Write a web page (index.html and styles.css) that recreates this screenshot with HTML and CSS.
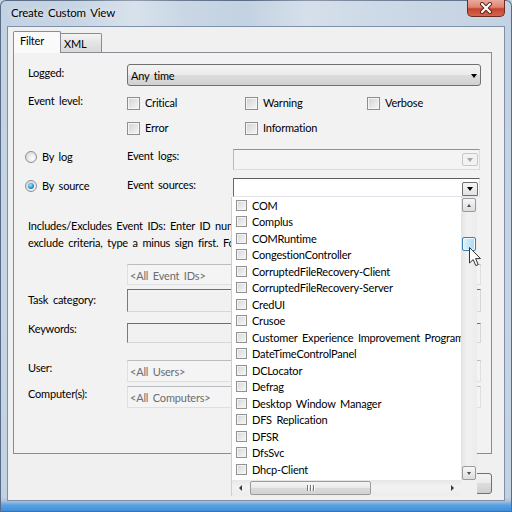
FILE: index.html
```html
<!DOCTYPE html>
<html>
<head>
<meta charset="utf-8">
<link rel="stylesheet" href="styles.css">
</head>
<body>
<div class="window">
  <div class="titlebar">
    <span class="title">Create Custom View</span>
    <div class="close">
      <svg width="14" height="12" viewBox="0 0 14 12">
        <path d="M3 2 L11 10 M11 2 L3 10" stroke="#5a1f17" stroke-width="4" stroke-linecap="round"/>
        <path d="M3 2 L11 10 M11 2 L3 10" stroke="#ffffff" stroke-width="2.2" stroke-linecap="round"/>
      </svg>
    </div>
  </div>
  <div class="client">
    <div class="tabs">
      <div class="tab active">Filter</div>
      <div class="tab xml">XML</div>
    </div>
    <div class="panel">
      <div class="row r1">
        <div class="lbl">Logged:</div>
        <div class="combo"><span>Any time</span><span class="arr"></span></div>
      </div>
      <div class="row r2">
        <div class="lbl">Event level:</div>
        <div class="checks">
          <div class="chk c1"><span class="box"></span>Critical</div>
          <div class="chk c2"><span class="box"></span>Warning</div>
          <div class="chk"><span class="box"></span>Verbose</div>
        </div>
      </div>
      <div class="row r3">
        <div class="lbl"></div>
        <div class="checks">
          <div class="chk c1"><span class="box"></span>Error</div>
          <div class="chk c2"><span class="box"></span>Information</div>
        </div>
      </div>
      <div class="row r4">
        <div class="ritem"><span class="radio"></span>By log</div>
        <div class="lbl2">Event logs:</div>
        <div class="cb-dis"><span class="dbtn"><span class="arr grey"></span></span></div>
      </div>
      <div class="row r5">
        <div class="ritem"><span class="radio on"></span>By source</div>
        <div class="lbl2">Event sources:</div>
        <div class="cb-src"><span class="sbtn"><span class="arr"></span></span></div>
      </div>
      <div class="row r6">
        <div class="desc">Includes/Excludes Event IDs: Enter ID numbers and/or ID ranges separated by commas. To<br>exclude criteria, type a minus sign first. For example 1,3,5-99,-76</div>
      </div>
      <div class="row r7">
        <div class="lbl"></div>
        <div class="field">&lt;All Event IDs&gt;</div>
      </div>
      <div class="row r8">
        <div class="lbl">Task category:</div>
        <div class="field2"></div>
      </div>
      <div class="row r9">
        <div class="lbl">Keywords:</div>
        <div class="field2"></div>
      </div>
      <div class="row r10">
        <div class="lbl">User:</div>
        <div class="field">&lt;All Users&gt;</div>
      </div>
      <div class="row r11">
        <div class="lbl">Computer(s):</div>
        <div class="field">&lt;All Computers&gt;</div>
      </div>
    </div>
    <div class="buttons">
      <div class="btn">OK</div>
      <div class="btn">Cancel</div>
    </div>

    <div class="droplist">
      <div class="dl-body">
        <div class="items">
          <div class="item"><span class="ibox"></span>COM</div>
          <div class="item"><span class="ibox"></span>Complus</div>
          <div class="item"><span class="ibox"></span>COMRuntime</div>
          <div class="item"><span class="ibox"></span>CongestionController</div>
          <div class="item"><span class="ibox"></span>CorruptedFileRecovery-Client</div>
          <div class="item"><span class="ibox"></span>CorruptedFileRecovery-Server</div>
          <div class="item"><span class="ibox"></span>CredUI</div>
          <div class="item"><span class="ibox"></span>Crusoe</div>
          <div class="item"><span class="ibox"></span>Customer Experience Improvement Program</div>
          <div class="item"><span class="ibox"></span>DateTimeControlPanel</div>
          <div class="item"><span class="ibox"></span>DCLocator</div>
          <div class="item"><span class="ibox"></span>Defrag</div>
          <div class="item"><span class="ibox"></span>Desktop Window Manager</div>
          <div class="item"><span class="ibox"></span>DFS Replication</div>
          <div class="item"><span class="ibox"></span>DFSR</div>
          <div class="item"><span class="ibox"></span>DfsSvc</div>
          <div class="item"><span class="ibox"></span>Dhcp-Client</div>
        </div>
        <div class="vscroll">
          <div class="vbtn"><span class="uarr"></span></div>
          <div class="vtrack"><div class="vthumb"></div></div>
          <div class="vbtn"><span class="darr"></span></div>
        </div>
      </div>
      <div class="hscroll">
        <div class="harrow"><span class="larr"></span></div>
        <div class="hthumb"><span class="grip"></span><span class="grip"></span><span class="grip"></span></div>
        <div class="hspace"></div>
        <div class="harrow"><span class="rarr"></span></div>
        <div class="corner"></div>
      </div>
    </div>

    <svg class="cursor" width="13" height="20" viewBox="0 0 13 20">
      <path d="M0.5 0.5 L0.5 16 L4.2 12.6 L6.8 18.6 L9.2 17.6 L6.6 11.6 L11.5 11.6 Z" fill="#ffffff" stroke="#333333" stroke-width="1" stroke-linejoin="round"/>
    </svg>
  </div>
</div>
</body>
</html>
```

FILE: styles.css
```css
* { box-sizing: border-box; }
html, body { margin: 0; padding: 0; }
body {
  width: 512px;
  height: 512px;
  overflow: hidden;
  font-family: Lato, "Noto Sans", sans-serif;
  font-size: 11px;
  letter-spacing: -0.2px;
  word-spacing: 2px;
  color: #000;
  background: #c4d3e2;
}

.window {
  width: 512px;
  height: 512px;
  display: flex;
  flex-direction: column;
  border-radius: 6px 6px 0 0;
  background: linear-gradient(to bottom, #c3d2e2 0, #c6d4e3 300px, #c3d2e1 497px, #adc2d9 501px, #5aa3e3 505px, #3c8ad5 512px);
  box-shadow: inset 0 0 0 1px #586c85;
}

.titlebar {
  height: 26px;
  flex-shrink: 0;
  display: flex;
  align-items: flex-start;
  padding: 0 7px 0 11px;
  background: linear-gradient(90deg, rgba(255,255,255,0) 0%, rgba(255,255,255,0.05) 14%, rgba(255,255,255,0.35) 26%, rgba(255,255,255,0.1) 36%, rgba(255,255,255,0) 48%, rgba(255,255,255,0.3) 60%, rgba(255,255,255,0.15) 75%, rgba(255,255,255,0) 100%);
  border-radius: 6px 6px 0 0;
}
.title {
  margin-top: 5px;
  line-height: 16px;
  font-size: 11.5px;
  color: #000;
  text-shadow: 0 0 5px rgba(255,255,255,0.9);
}
.close {
  margin-left: auto;
  width: 38px;
  height: 17px;
  border: 1px solid #6c2b22;
  border-top: none;
  border-radius: 0 0 5px 5px;
  background: linear-gradient(to bottom, #eaaa9c 0%, #df8472 45%, #c7432e 55%, #d4664f 100%);
  display: flex;
  align-items: center;
  justify-content: center;
}

.client {
  flex: 1;
  margin: 0 7px 11px;
  background: #f0f0f0;
  border: 1px solid #7f91a8;
  position: relative;
  padding: 4px 12px 0 5px;
  display: flex;
  flex-direction: column;
}

.tabs {
  display: flex;
  align-items: flex-end;
  height: 22px;
  margin-bottom: -1px;
  position: relative;
  z-index: 1;
}
.tab {
  line-height: 16px;
  color: #000;
}
.tab.active {
  width: 48px;
  height: 22px;
  border: 1px solid #898c95;
  border-bottom: none;
  border-radius: 2px 2px 0 0;
  background: #fafafa;
  padding-left: 6px;
  padding-top: 1px;
}
.tab.xml {
  width: 41px;
  height: 19px;
  margin-bottom: 1px;
  border: 1px solid #898c95;
  border-left: none;
  border-bottom: none;
  border-radius: 0 2px 0 0;
  background: linear-gradient(to bottom, #f4f4f4, #e4e4e4 50%, #d9d9d9);
  padding-left: 3px;
  padding-top: 2px;
}

.panel {
  height: 402px;
  flex-shrink: 0;
  border: 1px solid #898c95;
  background: #f2f2f2;
  padding: 11px 10px 0 14px;
  display: flex;
  flex-direction: column;
}

.row { display: flex; align-items: flex-start; flex-shrink: 0; }
.lbl { width: 99px; flex-shrink: 0; line-height: 16px; padding-top: 1px; }
.lbl2 { width: 106px; flex-shrink: 0; line-height: 16px; padding-top: 1px; }

.r2 { margin-top: 6px; }
.r3 { margin-top: 9px; }
.r4 { margin-top: 11px; }
.r5 { margin-top: 6px; }
.r6 { margin-top: 19px; }
.r7 { margin-top: 13px; }
.r8 { margin-top: 4px; }
.r9 { margin-top: 8px; }
.r10 { margin-top: 16px; }
.r11 { margin-top: 3px; }

.combo {
  width: 354px;
  height: 22px;
  border: 1px solid #707070;
  border-radius: 3px;
  background: linear-gradient(to bottom, #f3f3f3 0%, #ebebeb 50%, #dddddd 50%, #d0d0d0 100%);
  display: flex;
  align-items: center;
  justify-content: space-between;
  padding: 1px 3px 0 3px;
  color: #000;
}
.arr {
  width: 0;
  height: 0;
  border-left: 3.5px solid transparent;
  border-right: 3.5px solid transparent;
  border-top: 4px solid #000;
}
.arr.grey { border-top-color: #a6a6a6; }

.checks { display: flex; }
.r2 .checks { margin-top: 3px; }
.chk {
  display: flex;
  align-items: center;
  gap: 5px;
  height: 16px;
  line-height: 16px;
}
.chk.c1 { width: 118px; }
.chk.c2 { width: 122px; }
.box {
  width: 13px;
  height: 13px;
  flex-shrink: 0;
  border: 1px solid #8e8f8f;
  background: linear-gradient(135deg, #cfd1d3 0%, #f7f7f7 100%);
  box-shadow: inset 0 0 0 1px #f5f5f5;
}

.ritem {
  width: 102px;
  margin-left: -3px;
  flex-shrink: 0;
  display: flex;
  align-items: center;
  gap: 5px;
  height: 18px;
  line-height: 16px;
  padding-top: 1px;
}
.radio {
  width: 12px;
  height: 12px;
  border-radius: 50%;
  border: 1px solid #8e8f8f;
  background: radial-gradient(circle at 65% 65%, #ffffff 0%, #e6e6e6 50%, #cfcfcf 100%);
  display: flex;
  align-items: center;
  justify-content: center;
  flex-shrink: 0;
}
.radio.on::after {
  content: "";
  width: 6px;
  height: 6px;
  border-radius: 50%;
  background: radial-gradient(circle at 40% 35%, #b5ecff 0%, #3aa0e6 45%, #0b4f99 100%);
}

.cb-dis {
  width: 247px;
  height: 21px;
  margin-top: 2px;
  background: #f4f4f4;
  border: 1px solid #dadcdf;
  border-top-color: #8f9194;
  border-left-color: #b7b9bc;
  display: flex;
  align-items: center;
  justify-content: flex-end;
  padding-right: 1px;
}
.dbtn {
  width: 16px;
  height: 13px;
  border: 1px solid #c7c7c7;
  border-radius: 2px;
  background: #f2f2f2;
  display: flex;
  align-items: center;
  justify-content: center;
}
.cb-src {
  width: 247px;
  height: 19px;
  margin-top: 2px;
  background: #ffffff;
  border: 1px solid #e2e3ea;
  border-top-color: #5e5e5e;
  border-left-color: #6a6a6a;
  display: flex;
  align-items: flex-end;
  justify-content: flex-end;
  padding-right: 1px;
}
.sbtn {
  width: 16px;
  height: 14px;
  border: 1px solid #6f6f6f;
  border-radius: 2px 2px 0 0;
  background: linear-gradient(to bottom, #f6f6f6, #e2e2e2);
  display: flex;
  align-items: center;
  justify-content: center;
}

.desc {
  width: 203px;
  overflow: hidden;
  white-space: nowrap;
  line-height: 17px;
  padding-top: 1px;
}

.field {
  width: 354px;
  height: 21px;
  background: #f4f4f4;
  border: 1px solid #dcdfe3;
  border-top-color: #b9bcc1;
  color: #6d6d6d;
  padding: 1px 0 0 2px;
  display: flex;
  align-items: center;
}
.r10 .field, .r11 .field { height: 22px; margin-top: 1px; }
.field2 {
  width: 354px;
  height: 23px;
  background: #f1f1f1;
  border: 1px solid #d6d6d6;
  border-top-color: #6e6e6e;
  border-left-color: #7a7a7a;
}
.r9 .field2 { height: 20px; margin-top: 3px; }
.r8 .lbl { margin-top: 2px; }

.buttons {
  display: flex;
  justify-content: flex-end;
  gap: 6px;
  margin-top: 19px;
}
.btn {
  width: 75px;
  height: 21px;
  border: 1px solid #707070;
  border-radius: 3px;
  background: linear-gradient(to bottom, #f2f2f2 0%, #ebebeb 50%, #dddddd 50%, #cfcfcf 100%);
  display: flex;
  align-items: center;
  justify-content: center;
  color: #000;
}

/* drop-down list overlay */
.droplist {
  position: absolute;
  left: 223px;
  top: 170px;
  width: 246px;
  height: 299px;
  z-index: 5;
  background: #ffffff;
  border-left: 1px solid #cfcfcf;
  display: flex;
  flex-direction: column;
}
.dl-body { display: flex; height: 283px; }
.items {
  flex: 1;
  overflow: hidden;
  padding-left: 4px;
}
.item {
  height: 16.5px;
  display: flex;
  align-items: center;
  gap: 5px;
  white-space: nowrap;
  color: #000;
}
.ibox {
  width: 11px;
  height: 11px;
  flex-shrink: 0;
  border: 1px solid #929292;
  background: linear-gradient(135deg, #d4d6d8 0%, #f8f8f8 100%);
  box-shadow: inset 0 0 0 1px #f3f3f3;
}
.vscroll {
  width: 16px;
  display: flex;
  flex-direction: column;
  background: linear-gradient(90deg, #e3e3e3, #f1f1f1 40%, #ececec);
  padding: 1px 1px 0 1px;
}
.vbtn {
  height: 14px;
  border: 1px solid #9a9a9a;
  border-radius: 2px;
  background: linear-gradient(to bottom, #f7f7f7, #dcdcdc);
  display: flex;
  align-items: center;
  justify-content: center;
  flex-shrink: 0;
}
.vtrack { flex: 1; padding-top: 25px; }
.vthumb {
  height: 14px;
  border: 1px solid #3c7fb1;
  border-radius: 2px;
  background: linear-gradient(90deg, #e5f4fc, #c4e5f6 50%, #a9dbf6);
  box-shadow: inset 0 0 0 1px #f0faff;
}
.uarr, .darr {
  width: 0;
  height: 0;
  border-left: 2.5px solid transparent;
  border-right: 2.5px solid transparent;
}
.uarr { border-bottom: 3px solid #4d4d4d; }
.darr { border-top: 3px solid #4d4d4d; }
.hscroll {
  height: 16px;
  display: flex;
  align-items: stretch;
  background: linear-gradient(to bottom, #e6e6e6, #f2f2f2 40%, #ededed);
}
.harrow {
  width: 17px;
  display: flex;
  align-items: center;
  justify-content: center;
  flex-shrink: 0;
}
.larr, .rarr {
  width: 0;
  height: 0;
  border-top: 3px solid transparent;
  border-bottom: 3px solid transparent;
}
.larr { border-right: 3px solid #3a3a3a; }
.rarr { border-left: 3px solid #3a3a3a; }
.hthumb {
  width: 121px;
  margin: 1px 0 1px 1px;
  border: 1px solid #9b9b9b;
  border-radius: 2px;
  background: linear-gradient(to bottom, #f4f4f4 0%, #e9e9e9 50%, #d9d9d9 51%, #d3d3d3 100%);
  display: flex;
  align-items: center;
  justify-content: center;
  gap: 2px;
}
.grip { width: 1px; height: 6px; background: #777; box-shadow: 1px 0 0 #fff; }
.hspace { flex: 1; }
.corner { width: 16px; background: #f0f0f0; flex-shrink: 0; }

.cursor {
  position: absolute;
  left: 461px;
  top: 220px;
  z-index: 6;
}
```
